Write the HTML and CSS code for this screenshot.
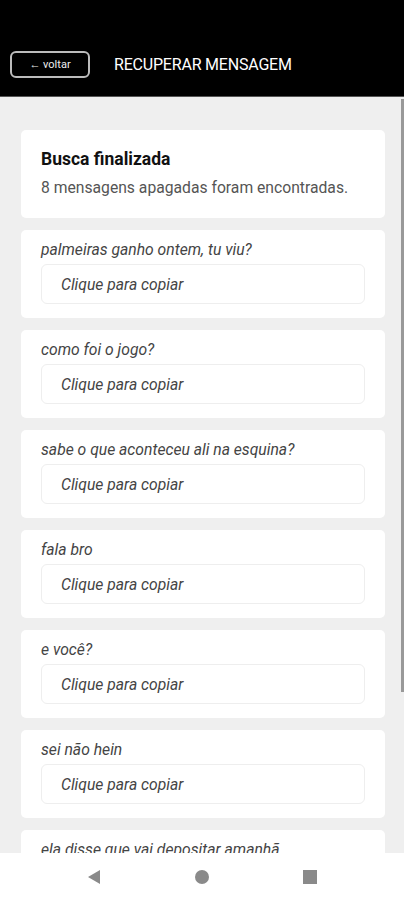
FILE: index.html
```html
<!DOCTYPE html>
<html lang="pt-BR">
<head>
    <meta charset="UTF-8">
    <title>Recuperar Mensagem</title>
    <link rel="stylesheet" href="styles.css">
</head>
<body>
    <div class="topo">
        <button class="voltar">← voltar</button>
        <span class="titulo">RECUPERAR MENSAGEM</span>
    </div>

    <div class="conteudo">
        <div class="card resumo">
            <h3>Busca finalizada</h3>
            <p>8 mensagens apagadas foram encontradas.</p>
        </div>

        <div class="card msg">
            <p class="texto">palmeiras ganho ontem, tu viu?</p>
            <div class="copiar">Clique para copiar</div>
        </div>
        <div class="card msg">
            <p class="texto">como foi o jogo?</p>
            <div class="copiar">Clique para copiar</div>
        </div>
        <div class="card msg">
            <p class="texto">sabe o que aconteceu ali na esquina?</p>
            <div class="copiar">Clique para copiar</div>
        </div>
        <div class="card msg">
            <p class="texto">fala bro</p>
            <div class="copiar">Clique para copiar</div>
        </div>
        <div class="card msg">
            <p class="texto">e você?</p>
            <div class="copiar">Clique para copiar</div>
        </div>
        <div class="card msg">
            <p class="texto">sei não hein</p>
            <div class="copiar">Clique para copiar</div>
        </div>
        <div class="card msg">
            <p class="texto">ela disse que vai depositar amanhã</p>
            <div class="copiar">Clique para copiar</div>
        </div>
    </div>

    <div class="rolagem"></div>

    <div class="navbar">
        <svg width="16" height="16" viewBox="0 0 16 16"><polygon points="14,1 14,15 2,8" fill="#8a8a8a"/></svg>
        <svg width="16" height="16" viewBox="0 0 16 16"><circle cx="8" cy="8" r="7" fill="#8a8a8a"/></svg>
        <svg width="16" height="16" viewBox="0 0 16 16"><rect x="1" y="1" width="14" height="14" fill="#8a8a8a"/></svg>
    </div>
</body>
</html>
```

FILE: styles.css
```css
body {
    font-family: Roboto, "Noto Sans", sans-serif;
    background-color: #efefef;
    color: #222;
    margin: 0;
    padding: 0;
    width: 404px;
    height: 900px;
    overflow: hidden;
    position: relative;
}
.topo {
    height: 97px;
    background-color: #000;
    border-bottom: 1px solid #555;
    display: flex;
    align-items: flex-end;
    padding: 0 0 18px 10px;
    box-sizing: border-box;
    gap: 24px;
}
.voltar {
    width: 80px;
    height: 27px;
    background: #000;
    border: 2px solid #bbb;
    border-radius: 6px;
    color: #eee;
    font-family: Roboto, sans-serif;
    font-size: 11px;
    padding: 0;
}
.titulo {
    color: #fff;
    font-size: 16px;
    line-height: 27px;
    letter-spacing: -0.2px;
}
.conteudo {
    padding: 33px 19px 0 21px;
    display: flex;
    flex-direction: column;
    gap: 12px;
}
.card {
    background-color: #fff;
    border-radius: 5px;
    height: 88px;
    box-sizing: border-box;
    padding: 0 20px;
    flex-shrink: 0;
}
.resumo {
    padding-top: 19px;
}
.resumo h3 {
    margin: 0;
    font-size: 17.5px;
    line-height: 20px;
    font-weight: bold;
    color: #111;
}
.resumo p {
    margin: 10px 0 0;
    font-size: 15.7px;
    line-height: 18px;
    color: #555;
}
.msg {
    padding-top: 11px;
}
.texto {
    margin: 0 0 5px;
    font-size: 15.7px;
    font-style: italic;
    color: #444;
    line-height: 18px;
}
.copiar {
    height: 40px;
    border: 1px solid #eee;
    border-radius: 6px;
    box-sizing: border-box;
    padding-left: 19px;
    line-height: 39px;
    font-size: 15.7px;
    font-style: italic;
    color: #444;
}
.rolagem {
    position: absolute;
    right: 0;
    top: 99px;
    width: 3px;
    height: 593px;
    background-color: #999;
}
.navbar {
    position: absolute;
    left: 0;
    bottom: 0;
    width: 100%;
    height: 47px;
    background-color: #fff;
    display: flex;
    justify-content: center;
    align-items: center;
    gap: 92px;
}
```
